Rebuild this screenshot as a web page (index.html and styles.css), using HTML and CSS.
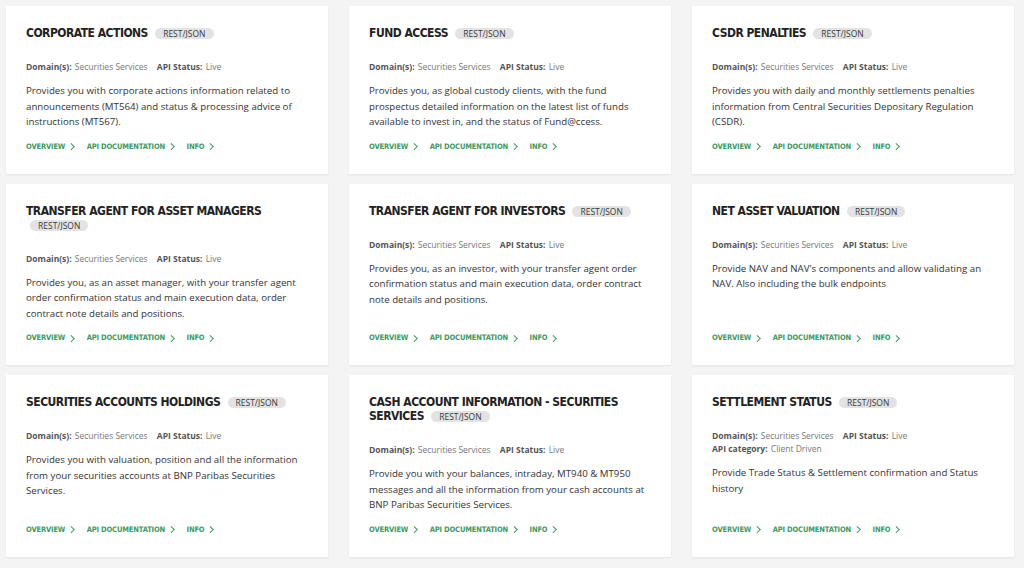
FILE: index.html
```html
<!DOCTYPE html>
<html lang="en">
<head>
<meta charset="utf-8">
<title>APIs</title>
<link rel="stylesheet" href="styles.css">
</head>
<body>
<main class="grid">
  <article class="card">
    <h2 class="title">CORPORATE ACTIONS <span class="badge">REST/JSON</span></h2>
    <div class="meta"><span class="row"><b>Domain(s):</b> Securities Services <b class="sp">API Status:</b> Live</span></div>
    <p class="desc">Provides you with corporate actions information related to announcements (MT564) and status &amp; processing advice of instructions (MT567).</p>
    <nav class="links"><a>OVERVIEW <i class="chev"></i></a><a>API DOCUMENTATION <i class="chev"></i></a><a>INFO <i class="chev"></i></a></nav>
  </article>
  <article class="card">
    <h2 class="title">FUND ACCESS <span class="badge">REST/JSON</span></h2>
    <div class="meta"><span class="row"><b>Domain(s):</b> Securities Services <b class="sp">API Status:</b> Live</span></div>
    <p class="desc">Provides you, as global custody clients, with the fund prospectus detailed information on the latest list of funds available to invest in, and the status of Fund@ccess.</p>
    <nav class="links"><a>OVERVIEW <i class="chev"></i></a><a>API DOCUMENTATION <i class="chev"></i></a><a>INFO <i class="chev"></i></a></nav>
  </article>
  <article class="card">
    <h2 class="title">CSDR PENALTIES <span class="badge">REST/JSON</span></h2>
    <div class="meta"><span class="row"><b>Domain(s):</b> Securities Services <b class="sp">API Status:</b> Live</span></div>
    <p class="desc">Provides you with daily and monthly settlements penalties information from Central Securities Depositary Regulation (CSDR).</p>
    <nav class="links"><a>OVERVIEW <i class="chev"></i></a><a>API DOCUMENTATION <i class="chev"></i></a><a>INFO <i class="chev"></i></a></nav>
  </article>

  <article class="card">
    <h2 class="title">TRANSFER AGENT FOR ASSET MANAGERS <span class="badge">REST/JSON</span></h2>
    <div class="meta"><span class="row"><b>Domain(s):</b> Securities Services <b class="sp">API Status:</b> Live</span></div>
    <p class="desc">Provides you, as an asset manager, with your transfer agent order confirmation status and main execution data, order contract note details and positions.</p>
    <nav class="links"><a>OVERVIEW <i class="chev"></i></a><a>API DOCUMENTATION <i class="chev"></i></a><a>INFO <i class="chev"></i></a></nav>
  </article>
  <article class="card">
    <h2 class="title">TRANSFER AGENT FOR INVESTORS <span class="badge">REST/JSON</span></h2>
    <div class="meta"><span class="row"><b>Domain(s):</b> Securities Services <b class="sp">API Status:</b> Live</span></div>
    <p class="desc">Provides you, as an investor, with your transfer agent order confirmation status and main execution data, order contract note details and positions.</p>
    <nav class="links"><a>OVERVIEW <i class="chev"></i></a><a>API DOCUMENTATION <i class="chev"></i></a><a>INFO <i class="chev"></i></a></nav>
  </article>
  <article class="card">
    <h2 class="title">NET ASSET VALUATION <span class="badge">REST/JSON</span></h2>
    <div class="meta"><span class="row"><b>Domain(s):</b> Securities Services <b class="sp">API Status:</b> Live</span></div>
    <p class="desc">Provide NAV and NAV's components and allow validating an NAV. Also including the bulk endpoints</p>
    <nav class="links"><a>OVERVIEW <i class="chev"></i></a><a>API DOCUMENTATION <i class="chev"></i></a><a>INFO <i class="chev"></i></a></nav>
  </article>

  <article class="card">
    <h2 class="title">SECURITIES ACCOUNTS HOLDINGS <span class="badge">REST/JSON</span></h2>
    <div class="meta"><span class="row"><b>Domain(s):</b> Securities Services <b class="sp">API Status:</b> Live</span></div>
    <p class="desc">Provides you with valuation, position and all the information from your securities accounts at BNP Paribas Securities Services.</p>
    <nav class="links"><a>OVERVIEW <i class="chev"></i></a><a>API DOCUMENTATION <i class="chev"></i></a><a>INFO <i class="chev"></i></a></nav>
  </article>
  <article class="card">
    <h2 class="title">CASH ACCOUNT INFORMATION - SECURITIES <span class="word">SERVICES</span> <span class="badge">REST/JSON</span></h2>
    <div class="meta"><span class="row"><b>Domain(s):</b> Securities Services <b class="sp">API Status:</b> Live</span></div>
    <p class="desc">Provide you with your balances, intraday, MT940 &amp; MT950 messages and all the information from your cash accounts at BNP Paribas Securities Services.</p>
    <nav class="links"><a>OVERVIEW <i class="chev"></i></a><a>API DOCUMENTATION <i class="chev"></i></a><a>INFO <i class="chev"></i></a></nav>
  </article>
  <article class="card">
    <h2 class="title">SETTLEMENT STATUS <span class="badge">REST/JSON</span></h2>
    <div class="meta"><span class="row"><b>Domain(s):</b> Securities Services <b class="sp">API Status:</b> Live</span><span class="row"><b>API category:</b> Client Driven</span></div>
    <p class="desc">Provide Trade Status &amp; Settlement confirmation and Status history</p>
    <nav class="links"><a>OVERVIEW <i class="chev"></i></a><a>API DOCUMENTATION <i class="chev"></i></a><a>INFO <i class="chev"></i></a></nav>
  </article>
</main>
</body>
</html>
```

FILE: styles.css
```css
html, body {
  margin: 0;
  padding: 0;
  background: #f4f4f4;
}

body {
  font-family: "Open Sans", "Liberation Sans", sans-serif;
  color: #333;
}

.grid {
  display: grid;
  grid-template-columns: repeat(3, 322px);
  column-gap: 21px;
  row-gap: 10px;
  padding: 6px;
}

.card {
  background: #fff;
  box-shadow: 0 1px 2px rgba(0, 0, 0, 0.07);
  padding: 20px 20px 21px 20px;
  display: flex;
  flex-direction: column;
}

.title {
  margin: 0;
  font-family: "DejaVu Sans Condensed", "DejaVu Sans", sans-serif;
  font-weight: bold;
  font-size: 12px;
  letter-spacing: -0.5px;
  line-height: 14px;
  color: #222;
}

.badge {
  display: inline-block;
  margin-left: 4px;
  padding: 0 8px;
  height: 11px;
  line-height: 11px;
  border-radius: 6px;
  background: #e3e3e3;
  color: #3a3a3a;
  font-family: "Open Sans", sans-serif;
  font-weight: normal;
  font-size: 8.5px;
  letter-spacing: 0;
  vertical-align: 0;
}

.meta {
  margin-top: 20px;
  font-size: 8.5px;
  line-height: 13px;
  color: #777;
  display: flex;
  flex-direction: column;
}

.meta b {
  color: #555;
  font-weight: 700;
  margin-right: 1px;
}

.meta b.sp {
  margin-left: 7px;
}

.desc {
  margin: 10px 0 0 0;
  font-size: 9.7px;
  line-height: 15.5px;
  color: #333;
}

.links {
  margin-top: auto;
  padding-top: 11px;
  display: flex;
  gap: 13px;
  font-family: "DejaVu Sans Condensed", "DejaVu Sans", sans-serif;
  font-weight: bold;
  font-size: 7.5px;
  letter-spacing: -0.15px;
  line-height: 12px;
}

.links a {
  color: #3c9a5f;
  display: inline-flex;
  align-items: center;
  gap: 4px;
}

.chev {
  display: inline-block;
  width: 3.5px;
  height: 3.5px;
  border-right: 1px solid #3c9a5f;
  border-top: 1px solid #3c9a5f;
  transform: rotate(45deg);
}
```
